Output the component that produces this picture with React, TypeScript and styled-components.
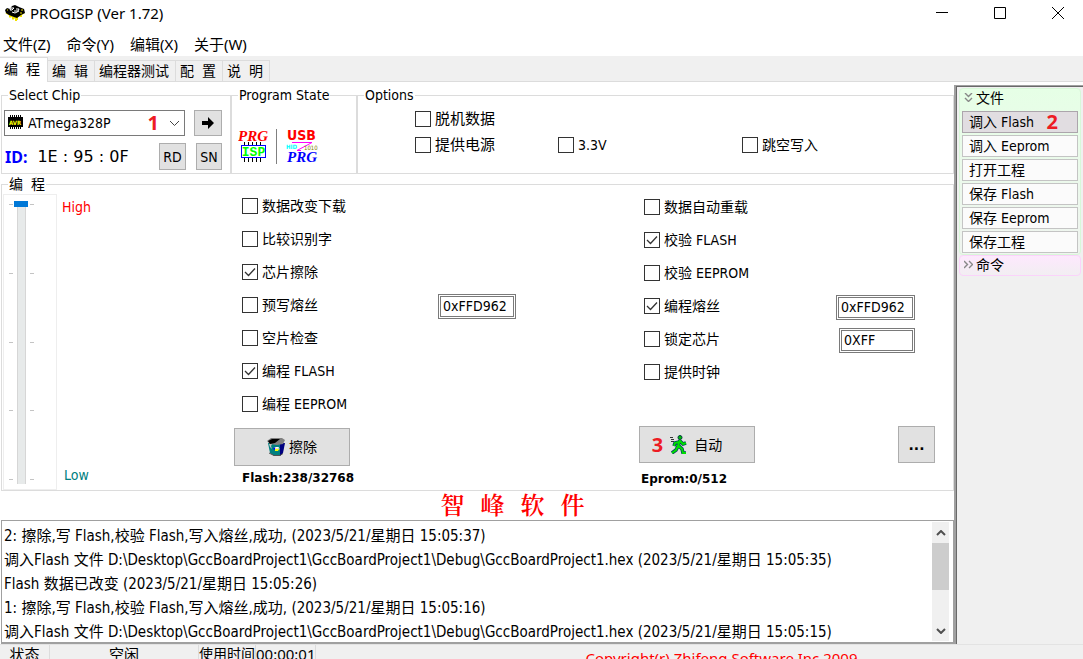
import React, { useState } from "react";
import styled, { createGlobalStyle } from "styled-components";

const uiFont = `"DejaVu Sans Condensed", "Noto Sans CJK SC", sans-serif`;
const menuFont = `"Noto Sans", "Noto Sans CJK SC", sans-serif`;
const line = "#dcdcdc";
const face = "#f0f0f0";

const GlobalStyle = createGlobalStyle`
  *, *::before, *::after { box-sizing: border-box; }
  body { margin: 0; background: #fff; color: #000; font: 14px/18px ${uiFont}; overflow: hidden; }
  button, input, select { font: inherit; color: inherit; margin: 0; }
`;

const Window = styled.div`
  display: flex;
  flex-direction: column;
  height: 100vh;
  overflow: hidden;
  white-space: pre;
  > * { flex-shrink: 0; }
`;

const TitleBar = styled.header`
  display: flex;
  align-items: center;
  height: 28px;
  padding: 0 7px 3px 5px;
  gap: 5px;
  font: 15px/20px ${menuFont};
`;

const TitleText = styled.h1`
  flex: 1;
  margin: 0;
  font: inherit;
`;

const WindowControls = styled.div`
  display: flex;
  gap: 22px;
`;

const WindowButton = styled.button`
  display: flex;
  align-items: center;
  justify-content: center;
  width: 36px;
  height: 26px;
  padding: 0;
  border: 0;
  background: none;
`;

const MenuBar = styled.nav`
  display: flex;
  align-items: center;
  gap: 16px;
  height: 28px;
  padding: 4px 3px 0;
  font: 15px/20px ${menuFont};
`;

const MenuItem = styled.button`
  padding: 0;
  border: 0;
  background: none;
`;

const Tabs = styled.div`
  display: flex;
  align-items: flex-end;
  height: 26px;
  background: ${face};
  box-shadow: inset 0 -1px ${line};
`;

const Tab = styled.button<{ $active?: boolean }>`
  height: ${(p) => (p.$active ? 25 : 22)}px;
  padding: ${(p) => (p.$active ? "0 7px 2px 4px" : "0 6px 0 4px")};
  border: 1px solid ${line};
  border-left: 0;
  border-bottom-width: ${(p) => (p.$active ? 0 : 1)}px;
  background: ${(p) => (p.$active ? "#fff" : face)};
  white-space: pre;
`;

const Body = styled.div`
  display: flex;
`;

const Main = styled.main`
  flex: 1;
  min-width: 0;
  padding: 4px 0 0 1px;
`;

const TopGroups = styled.div`
  display: flex;
`;

const Group = styled.fieldset<{ $width?: number }>`
  flex: ${(p) => (p.$width ? `0 0 ${p.$width}px` : "1")};
  min-width: 0;
  height: 88px;
  margin: 0;
  padding: 0;
  border: 1px solid ${line};
`;

const MainGroup = styled(Group)`
  height: auto;
  margin-top: 1px;
`;

const Legend = styled.legend`
  margin-left: 6px;
  padding: 0 1px;
  line-height: 18px;
`;

const ChipPanel = styled.div`
  display: flex;
  flex-direction: column;
  gap: 7px;
  padding: 6px 8px 0 2px;
`;

const ChipRow = styled.div`
  display: flex;
  align-items: center;
  gap: 9px;
`;

const IdRow = styled(ChipRow)`
  gap: 10px;
`;

const Combo = styled.label`
  position: relative;
  flex: 1;
  display: flex;
`;

const ComboSelect = styled.select`
  appearance: none;
  width: 100%;
  height: 26px;
  padding: 0 30px 0 23px;
  border: 1px solid #7a7a7a;
  border-radius: 0;
  background: #fff;
`;

const ComboIcon = styled.span`
  position: absolute;
  left: 4px;
  top: 5px;
  display: flex;
`;

const ComboArrow = styled.span`
  position: absolute;
  right: 5px;
  top: 10px;
  display: flex;
`;

const Mark = styled.b`
  color: #ed1c24;
  font: 700 20px/22px "Noto Sans", sans-serif;
`;

const ComboMark = styled(Mark)`
  position: absolute;
  right: 26px;
  top: 2px;
`;

const PushButton = styled.button<{ $w: number; $h: number }>`
  display: flex;
  align-items: center;
  justify-content: center;
  gap: 4px;
  width: ${(p) => p.$w}px;
  height: ${(p) => p.$h}px;
  padding: 0;
  border: 1px solid #adadad;
  background: #e1e1e1;
`;

const AutoButton = styled(PushButton)`
  gap: 7px;
  padding-right: 20px;
`;

const IdLabel = styled.b`
  color: #0000ff;
  font: 700 16px/20px "Noto Sans", sans-serif;
  margin-left: 1px;
`;

const IdValue = styled.output`
  flex: 1;
  font: 16px/20px "DejaVu Sans", sans-serif;
`;

const StatePanel = styled.div`
  display: flex;
  gap: 8px;
  padding: 25px 0 0 6px;
`;

const Divider = styled.span`
  width: 1px;
  background: #808080;
`;

const OptionGrid = styled.div`
  display: grid;
  grid-template-columns: 143px 184px 1fr;
  grid-auto-rows: 26px;
  align-items: center;
  padding: 2px 0 0 57px;
`;

const CheckLabel = styled.label<{ $large?: boolean }>`
  display: flex;
  align-items: center;
  gap: 4px;
  font-size: ${(p) => (p.$large ? 15 : 14)}px;
`;

const CheckBox = styled.input`
  appearance: none;
  flex: none;
  width: 16px;
  height: 16px;
  border: 1px solid #333;
  background: #fff;
  &:checked {
    background: url("data:image/svg+xml,%3Csvg xmlns='http://www.w3.org/2000/svg' viewBox='0 0 14 14'%3E%3Cpath d='M2 7l3.5 3.5L12 3.5' fill='none' stroke='%23333' stroke-width='1.3'/%3E%3C/svg%3E");
  }
`;

const Spacer = styled.span`
  grid-column: 2 / -1;
`;

const MainPanel = styled.div`
  display: flex;
  padding: 1px 18px 0 1px;
  height: 297px;
`;

const SliderBox = styled.div`
  display: flex;
  width: 54px;
  padding: 6px 0 5px 5px;
  border: 1px solid #eee;
`;

const Ticks = styled.div`
  display: flex;
  flex-direction: column;
  justify-content: space-between;
  padding: 3px 0 4px;
`;

const Tick = styled.i`
  width: 4px;
  height: 1px;
  background: #c4c4c4;
`;

const Slider = styled.input`
  appearance: none;
  writing-mode: vertical-lr;
  width: 14px;
  height: 283px;
  margin: 0 2px 0 1px;
  background: linear-gradient(90deg, transparent 3px, #d6d6d6 3px 4px, #e7eaea 4px 11px, #d6d6d6 11px 12px, transparent 12px);
  &::-webkit-slider-thumb {
    appearance: none;
    width: 14px;
    height: 6px;
    background: #0078d7;
  }
`;

const SpeedLabels = styled.div`
  display: flex;
  flex-direction: column;
  justify-content: space-between;
  width: 177px;
  padding: 4px 0 6px 5px;
  color: #008080;
`;

const High = styled.span`
  color: #ff0000;
`;

const Low = styled.span`
  padding-left: 2px;
`;

const Column = styled.section<{ $width?: number }>`
  flex: ${(p) => (p.$width ? `0 1 ${p.$width}px` : "1")};
  min-width: 0;
`;

const Checks = styled.div<{ $indent: number; $lift: number }>`
  display: grid;
  grid-auto-rows: 33px;
  height: 233px;
  margin-top: -${(p) => p.$lift}px;
  padding-left: ${(p) => p.$indent}px;
`;

const CheckRow = styled.div`
  display: flex;
  align-items: center;
  justify-content: space-between;
`;

const FuseInput = styled.input<{ $w: number; $gap: number }>`
  width: ${(p) => p.$w}px;
  height: 25px;
  margin: 3px ${(p) => p.$gap}px 0 0;
  padding: 0 2px;
  border: 3px double #7a7a7a;
  background: #fff;
`;

const Actions = styled.div<{ $top: number }>`
  display: flex;
  justify-content: space-between;
  padding-top: ${(p) => p.$top}px;
`;

const Capacity = styled.p`
  margin: 7px 0 0;
  padding-left: 2px;
  font: 700 12px/18px "DejaVu Sans", sans-serif;
`;

const LeftCapacity = styled(Capacity)`
  margin-top: 3px;
  padding-left: 8px;
`;

const Dots = styled.b`
  font: 700 14px/18px "DejaVu Sans", sans-serif;
`;

const Vendor = styled.h2`
  display: flex;
  justify-content: center;
  gap: 16px;
  height: 29px;
  margin: 0;
  padding-left: 70px;
  color: #ff0000;
  font: 600 24px/26px "Noto Serif CJK SC", "Noto Sans CJK SC", serif;
`;

const LogPanel = styled.section`
  display: flex;
  height: 124px;
  padding: 1px 4px 0 0;
  border: 1px solid #a0a0a0;
  border-bottom-width: 2px;
`;

const LogList = styled.ul`
  flex: 1;
  min-width: 0;
  margin: 0;
  padding: 2px 0 0 2px;
  list-style: none;
  overflow: hidden;
  font-size: 15px;
  line-height: 24px;
`;

const ScrollBar = styled.div`
  display: flex;
  flex-direction: column;
  width: 17px;
  margin-bottom: 1px;
  background: ${face};
`;

const ScrollButton = styled.button`
  display: flex;
  align-items: center;
  justify-content: center;
  height: 21px;
  padding: 0;
  border: 0;
  background: none;
`;

const ScrollTrack = styled.div`
  flex: 1;
`;

const ScrollThumb = styled.div`
  height: 47px;
  background: #cdcdcd;
`;

const SideBar = styled.aside`
  width: 129px;
  margin-top: 3px;
  padding: 2px 0 0 3px;
  border-left: 2px solid #a0a0a0;
  border-top: 1px solid #a0a0a0;
  background: ${face};
  box-shadow: inset 1px 1px #696969;
`;

const SideSection = styled.section<{ $tint: "green" | "pink" }>`
  width: 122px;
  border: 1px solid ${(p) => (p.$tint === "green" ? "#d8f8d8" : "#fbd3fb")};
  border-radius: 4px;
  background: ${(p) =>
    p.$tint === "green" ? "linear-gradient(#e6ffe6, #f0f4f0)" : "linear-gradient(#fde8fd, #f2eef2)"};
`;

const SideHeader = styled.h3`
  display: flex;
  align-items: center;
  gap: 3px;
  height: 19px;
  margin: 0;
  padding: 0 0 2px 4px;
  font: inherit;
`;

const SideList = styled.div`
  display: grid;
  gap: 2px;
  padding: 3px 2px 1px;
`;

const SideButton = styled.button<{ $active?: boolean }>`
  display: flex;
  align-items: center;
  justify-content: space-between;
  height: 22px;
  padding: 0 19px 0 6px;
  border: 1px solid ${(p) => (p.$active ? "#aca5ac" : "#c4c4c4")};
  background: ${(p) => (p.$active ? "#e1dde1" : "#fbfbfb")};
`;

const StatusBar = styled.footer`
  display: flex;
  align-items: flex-start;
  height: 24px;
  background: ${face};
  border-top: 1px solid #e3e3e3;
  font: 15px/18px ${menuFont};
`;

const StatusCell = styled.span<{ $w: number; $tight?: boolean }>`
  width: ${(p) => p.$w}px;
  height: 20px;
  border-right: 1px solid ${line};
  text-align: center;
  font-size: ${(p) => (p.$tight ? 14 : 15)}px;
`;

const Copyright = styled.span`
  margin: 4px auto 0;
  padding-left: 44px;
  color: #ff0000;
`;

function AppIcon() {
  return (
    <svg width="20" height="16" viewBox="0 0 20 16">
      <path d="M1 7.500l4 2v3M4 9.500l4 2.500v2.500M8 12l3 1v3M19 7.500l-3 2v2.500M16 9.500l-4 2v3.500" stroke="#f0e000" strokeWidth="2" fill="none" />
      <path d="M0 5l2-2 3 1 2-3 3-1 4 2 5 2 1 4-4 2-4 3-3-1-5-2-3-2z" fill="#000" />
      <path d="M6 3h3l-2 2h-2zM11 4h3l-1 2h-4M7 7l3 1 4-2" stroke="#fff" fill="none" />
      <path d="M2 5h1M16 5h2M15 8h2" stroke="#f0e000" />
    </svg>
  );
}

function ChipIcon() {
  return (
    <svg width="15" height="14" viewBox="0 0 15 14">
      <path d="M2.500 0v14M4.500 0v14M6.500 0v14M8.500 0v14M10.500 0v14M12.500 0v14" stroke="#000" shapeRendering="crispEdges" />
      <rect x="0" y="2" width="15" height="10" fill="#000" />
      <text x="7" y="10" textAnchor="middle" fontFamily="DejaVu Sans Condensed" fontWeight="700" fontSize="6" fill="#ff0">AVR</text>
    </svg>
  );
}

function IspIcon() {
  return (
    <svg width="30" height="35" viewBox="0 0 30 35">
      <text x="0" y="12" fontFamily="Liberation Serif" fontStyle="italic" fontWeight="700" fontSize="15" fill="#f00">PRG</text>
      <path d="M6.500 13v4M10.500 13v4M14.500 13v4M18.500 13v4M22.500 13v4M6.500 29v4M10.500 29v4M14.500 29v4M18.500 29v4M22.500 29v4" stroke="#000" />
      <rect x="3.500" y="16.500" width="24" height="12" fill="#fff" stroke="#00f" />
      <text x="15.500" y="27" textAnchor="middle" fontFamily="Liberation Mono" fontWeight="700" fontSize="13" fill="#0f0">ISP</text>
    </svg>
  );
}

function UsbIcon() {
  return (
    <svg width="35" height="35" viewBox="0 0 35 35">
      <text x="2" y="11" fontFamily="DejaVu Sans Condensed" fontWeight="700" fontSize="14" fill="#f00">USB</text>
      <path d="M7 13.500H27L12 21.500H16" stroke="#f0f" fill="none" />
      <text x="1" y="20" fontFamily="DejaVu Sans Condensed" fontWeight="700" fontSize="6" fill="#0ff">HID</text>
      <text x="19" y="21" fontFamily="DejaVu Sans Condensed" fontSize="6" fill="#808000">1010</text>
      <text x="2" y="33" fontFamily="Liberation Serif" fontStyle="italic" fontWeight="700" fontSize="15" fill="#00f">PRG</text>
    </svg>
  );
}

function BinIcon() {
  return (
    <svg width="18" height="18" viewBox="0 0 18 18">
      <path d="M1 5l2 10 4 3h5l3-2 2-11z" fill="#008080" />
      <path d="M13 5h5l-2 10-3 3z" fill="#000080" />
      <path d="M0 3l4-3h11l3 2-2 4-6 1-7-1z" fill="#808080" />
      <path d="M1 3l4-2h8l-5 4-5 1z" fill="#000" />
      <path d="M2 6h3l-1 2 1 3-2-2zM7 9h4l2 2-4 2z" fill="#c0c0c0" />
      <path d="M8 11h4l-1 2H8z" fill="#ff0" />
      <path d="M9 9h3l-1 1.500H8z" fill="#fff" />
      <path d="M6 11l2-2v3z" fill="#00f" />
      <path d="M2 15l5 2.500h6l3-2" stroke="#505050" fill="none" />
    </svg>
  );
}

function RunnerIcon() {
  return (
    <svg width="17" height="19" viewBox="0 0 17 19">
      <path d="M0 2.500h3M1 4.500h3M1 6.500h3" stroke="#333" />
      <path d="M10 5L8 11l-2 4-4 3M9 11l3 3 1 4h3M9 7L5 8l-1 3M10 6l3 3 3-1" stroke="#004060" strokeWidth="3.500" fill="none" />
      <path d="M10 5L8 11l-2 4-4 3M9 11l3 3 1 4h3M9 7L5 8l-1 3M10 6l3 3 3-1" stroke="#00e000" strokeWidth="2" fill="none" />
      <circle cx="10" cy="2.500" r="2" fill="#00c000" stroke="#004040" />
    </svg>
  );
}

function Chevron({ up }: { up?: boolean }) {
  return (
    <svg width="10" height="6" viewBox="0 0 10 6">
      <path d={up ? "M1 5l4-4 4 4" : "M1 1l4 4 4-4"} stroke="#505050" strokeWidth="2" fill="none" />
    </svg>
  );
}

function DoubleChevron({ open }: { open?: boolean }) {
  return (
    <svg width="9" height="9" viewBox="0 0 9 9">
      <path
        d={open ? "M1 0l3.500 3.500L8 0M1 5l3.500 3.500L8 5" : "M0 1l3.500 3.500L0 8M5 1l3.500 3.500L5 8"}
        stroke="#888"
        strokeWidth="1.400"
        fill="none"
      />
    </svg>
  );
}

function Check({ label, on, large }: { label: string; on?: boolean; large?: boolean }) {
  const [checked, setChecked] = useState(!!on);
  return (
    <CheckLabel $large={large}>
      <CheckBox type="checkbox" checked={checked} onChange={() => setChecked(!checked)} />
      {label}
    </CheckLabel>
  );
}

const tickMarks = [0, 1, 2, 3, 4];
const tabs = ["编  程", "编  辑", "编程器测试", "配  置", "说  明"];
const fileCommands = ["调入 Flash", "调入 Eeprom", "打开工程", "保存 Flash", "保存 Eeprom", "保存工程"];
const log = [
  "2: 擦除,写 Flash,校验 Flash,写入熔丝,成功, (2023/5/21/星期日 15:05:37)",
  "调入Flash 文件 D:\\Desktop\\GccBoardProject1\\GccBoardProject1\\Debug\\GccBoardProject1.hex (2023/5/21/星期日 15:05:35)",
  "Flash 数据已改变 (2023/5/21/星期日 15:05:26)",
  "1: 擦除,写 Flash,校验 Flash,写入熔丝,成功, (2023/5/21/星期日 15:05:16)",
  "调入Flash 文件 D:\\Desktop\\GccBoardProject1\\GccBoardProject1\\Debug\\GccBoardProject1.hex (2023/5/21/星期日 15:05:15)",
];

export default function App() {
  return (
    <Window>
      <GlobalStyle />
      <TitleBar>
        <AppIcon />
        <TitleText>PROGISP (Ver 1.72)</TitleText>
        <WindowControls>
          <WindowButton aria-label="Minimize">
            <svg width="12" height="12"><path d="M0 5.500h12" stroke="#000" /></svg>
          </WindowButton>
          <WindowButton aria-label="Maximize">
            <svg width="12" height="12"><path d="M.5.500h11v11H.5z" stroke="#000" fill="none" /></svg>
          </WindowButton>
          <WindowButton aria-label="Close">
            <svg width="12" height="12"><path d="M0 0l12 12M12 0L0 12" stroke="#000" /></svg>
          </WindowButton>
        </WindowControls>
      </TitleBar>
      <MenuBar>
        {["文件(Z)", "命令(Y)", "编辑(X)", "关于(W)"].map((m) => (
          <MenuItem key={m}>{m}</MenuItem>
        ))}
      </MenuBar>
      <Tabs role="tablist">
        {tabs.map((t, i) => (
          <Tab key={t} role="tab" aria-selected={i === 0} $active={i === 0}>{t}</Tab>
        ))}
      </Tabs>
      <Body>
        <Main>
          <TopGroups>
            <Group $width={230}>
              <Legend>Select Chip</Legend>
              <ChipPanel>
                <ChipRow>
                  <Combo>
                    <ComboSelect aria-label="Chip">
                      <option>ATmega328P</option>
                    </ComboSelect>
                    <ComboIcon><ChipIcon /></ComboIcon>
                    <ComboMark>1</ComboMark>
                    <ComboArrow><svg width="11" height="7"><path d="M1 1l4.500 4.500L10 1" stroke="#444" fill="none" /></svg></ComboArrow>
                  </Combo>
                  <PushButton $w={28} $h={26} aria-label="Apply chip">
                    <svg width="12" height="12"><path d="M0 4h6V0l6 6-6 6V8H0z" fill="#000" /></svg>
                  </PushButton>
                </ChipRow>
                <IdRow>
                  <IdLabel>ID:</IdLabel>
                  <IdValue>1E : 95 : 0F</IdValue>
                  <PushButton $w={27} $h={27}>RD</PushButton>
                  <PushButton $w={26} $h={27}>SN</PushButton>
                </IdRow>
              </ChipPanel>
            </Group>
            <Group $width={126}>
              <Legend>Program State</Legend>
              <StatePanel>
                <IspIcon />
                <Divider />
                <UsbIcon />
              </StatePanel>
            </Group>
            <Group>
              <Legend>Options</Legend>
              <OptionGrid>
                <Check label="脱机数据" large />
                <Spacer />
                <Check label="提供电源" large />
                <Check label="3.3V" />
                <Check label="跳空写入" />
              </OptionGrid>
            </Group>
          </TopGroups>
          <MainGroup>
            <Legend>{"编  程"}</Legend>
            <MainPanel>
              <SliderBox>
                <Ticks>{tickMarks.map((t) => <Tick key={t} />)}</Ticks>
                <Slider type="range" aria-label="Speed" min={0} max={4} defaultValue={0} />
                <Ticks>{tickMarks.map((t) => <Tick key={t} />)}</Ticks>
              </SliderBox>
              <SpeedLabels>
                <High>High</High>
                <Low>Low</Low>
              </SpeedLabels>
              <Column $width={405}>
                <Checks $indent={8} $lift={5}>
                  <CheckRow><Check label="数据改变下载" /></CheckRow>
                  <CheckRow><Check label="比较识别字" /></CheckRow>
                  <CheckRow><Check label="芯片擦除" on /></CheckRow>
                  <CheckRow>
                    <Check label="预写熔丝" />
                    <FuseInput $w={78} $gap={123} aria-label="预写熔丝" defaultValue="0xFFD962" />
                  </CheckRow>
                  <CheckRow><Check label="空片检查" /></CheckRow>
                  <CheckRow><Check label="编程 FLASH" on /></CheckRow>
                  <CheckRow><Check label="编程 EEPROM" /></CheckRow>
                </Checks>
                <Actions $top={6}>
                  <PushButton $w={116} $h={38}><BinIcon />擦除</PushButton>
                </Actions>
                <LeftCapacity>Flash:238/32768</LeftCapacity>
              </Column>
              <Column>
                <Checks $indent={5} $lift={4}>
                  <CheckRow><Check label="数据自动重载" /></CheckRow>
                  <CheckRow><Check label="校验 FLASH" on /></CheckRow>
                  <CheckRow><Check label="校验 EEPROM" /></CheckRow>
                  <CheckRow>
                    <Check label="编程熔丝" on />
                    <FuseInput $w={79} $gap={20} aria-label="编程熔丝" defaultValue="0xFFD962" />
                  </CheckRow>
                  <CheckRow>
                    <Check label="锁定芯片" />
                    <FuseInput $w={76} $gap={20} aria-label="锁定芯片" defaultValue="0XFF" />
                  </CheckRow>
                  <CheckRow><Check label="提供时钟" /></CheckRow>
                </Checks>
                <Actions $top={3}>
                  <AutoButton $w={116} $h={37}><Mark>3</Mark><RunnerIcon />自动</AutoButton>
                  <PushButton $w={37} $h={37}><Dots>...</Dots></PushButton>
                </Actions>
                <Capacity>Eprom:0/512</Capacity>
              </Column>
            </MainPanel>
          </MainGroup>
          <Vendor>
            <span>智</span><span>峰</span><span>软</span><span>件</span>
          </Vendor>
          <LogPanel>
            <LogList>{log.map((l) => <li key={l}>{l}</li>)}</LogList>
            <ScrollBar>
              <ScrollButton aria-label="Scroll up"><Chevron up /></ScrollButton>
              <ScrollTrack><ScrollThumb /></ScrollTrack>
              <ScrollButton aria-label="Scroll down"><Chevron /></ScrollButton>
            </ScrollBar>
          </LogPanel>
        </Main>
        <SideBar>
          <SideSection $tint="green">
            <SideHeader><DoubleChevron open />文件</SideHeader>
            <SideList>
              {fileCommands.map((c, i) => (
                <SideButton key={c} $active={i === 0}>{c}{i === 0 && <Mark>2</Mark>}</SideButton>
              ))}
            </SideList>
          </SideSection>
          <SideSection $tint="pink">
            <SideHeader><DoubleChevron />命令</SideHeader>
          </SideSection>
        </SideBar>
      </Body>
      <StatusBar>
        <StatusCell $w={50}>状态</StatusCell>
        <StatusCell $w={149}>空闲</StatusCell>
        <StatusCell $w={57} $tight>使用时间</StatusCell>
        <StatusCell $w={60}>00:00:01</StatusCell>
        <Copyright>Copyright(r) Zhifeng Software Inc 2009</Copyright>
      </StatusBar>
    </Window>
  );
}
